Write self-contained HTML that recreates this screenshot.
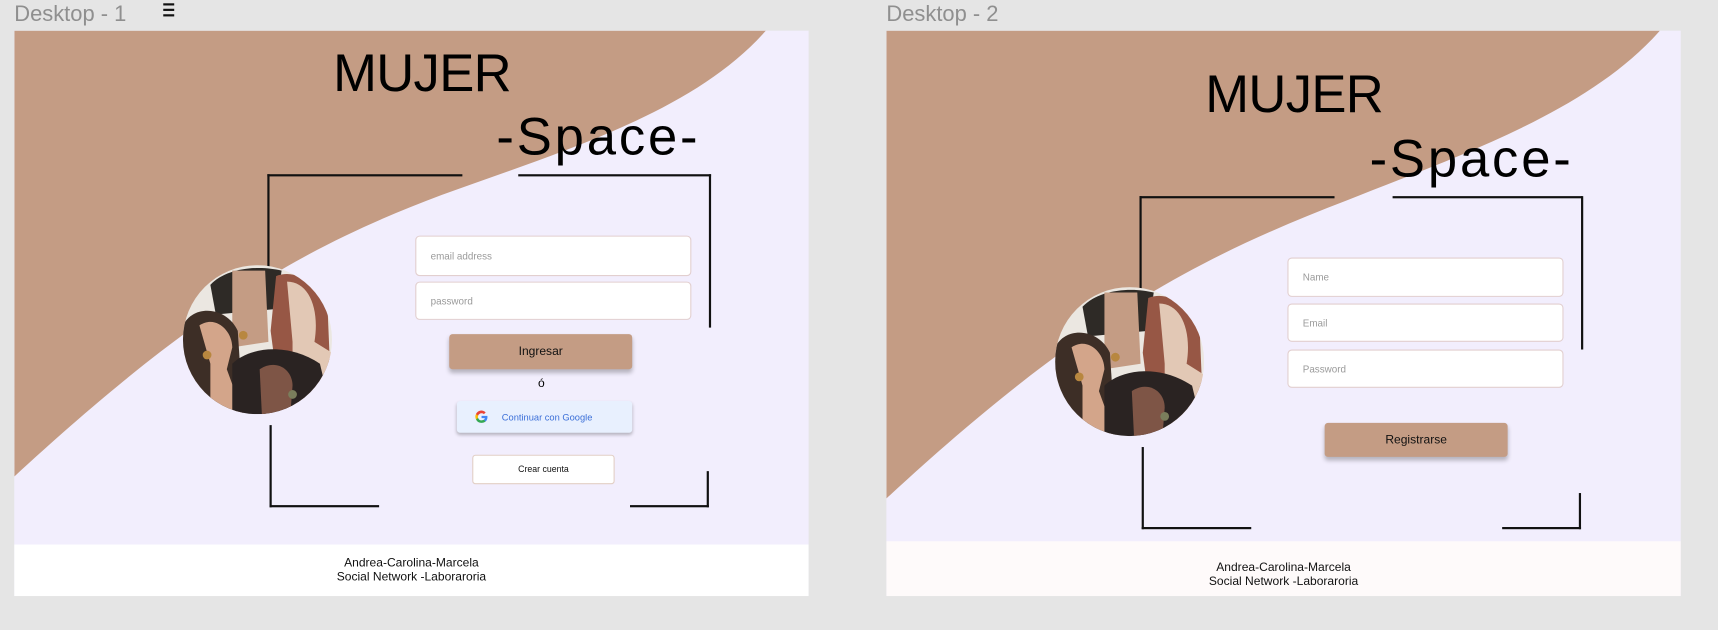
<!DOCTYPE html>
<html><head><meta charset="utf-8"><style>
*{margin:0;padding:0;box-sizing:border-box}
html,body{width:1718px;height:630px;overflow:hidden;background:#e5e5e5;font-family:"Liberation Sans",sans-serif}
#s{position:absolute;left:0;top:0;width:1568px;height:575px;transform:scale(1.09566);transform-origin:0 0}
.lbl{position:absolute;top:2px;font-size:20px;color:#8f8f8f}
.fr{position:absolute;top:28px;width:725px;height:516px;background:#f2eefd;overflow:hidden}
.fr svg.bg{position:absolute;left:0;top:0}
.foot{position:absolute;left:0;right:0;bottom:0;background:#fff;text-align:center;font-size:11px;line-height:13px;color:#111;padding-top:11px}
.t{position:absolute;font-size:48px;color:#000;line-height:1}
.m{letter-spacing:-0.6px}
.sp{letter-spacing:2.6px}
.ln{position:absolute;background:#111}
.in{position:absolute;background:#fff;border:1px solid #e2cfcf;border-radius:4px;font-size:9px;color:#9a9a9a;padding-left:13px;display:flex;align-items:center}
.btn{position:absolute;background:#c49c84;border-radius:3px;box-shadow:0 3px 4px rgba(0,0,0,.25);font-size:11px;display:flex;align-items:center;justify-content:center;color:#111}
</style></head><body><div id="s">
<div class="lbl" style="left:13px">Desktop - 1</div>
<div style="position:absolute;left:149px;top:3px;width:10px">
<div style="height:2px;background:#111;margin-bottom:3px"></div><div style="height:2px;background:#111;margin-bottom:3px"></div><div style="height:2px;background:#111"></div></div>
<div class="lbl" style="left:809px">Desktop - 2</div>

<div class="fr" style="left:13px">
<svg class="bg" width="725" height="516"><path d="M0,0 H686 C620,75 500,110 390,150 C270,195 170,250 0,407 Z" fill="#c49c84"/></svg>
<div class="t m" style="left:291px;top:16px">MUJER</div>
<div class="t sp" style="left:440px;top:74px">-Space-</div>
<div class="ln" style="left:231px;top:131px;width:178px;height:1.5px"></div>
<div class="ln" style="left:460px;top:131px;width:176px;height:1.5px"></div>
<div class="ln" style="left:231px;top:131px;width:1.5px;height:95px"></div>
<div class="ln" style="left:634px;top:131px;width:1.5px;height:140px"></div>
<div class="ln" style="left:233px;top:360px;width:1.5px;height:75px"></div>
<div class="ln" style="left:233px;top:433px;width:100px;height:1.5px"></div>
<div class="ln" style="left:562px;top:433px;width:72px;height:1.5px"></div>
<div class="ln" style="left:632px;top:402px;width:1.5px;height:33px"></div>
<svg style="position:absolute;left:154px;top:214px" width="136" height="136" viewBox="0 0 136 136"><defs><clipPath id="c1"><circle cx="68" cy="68" r="68"/></clipPath></defs><g clip-path="url(#c1)">
<rect width="136" height="136" fill="#ebe7e1"/>
<path d="M25,18 C40,2 70,0 90,5 L85,40 L30,45 Z" fill="#2e2a26"/>
<path d="M45,5 L75,5 L78,70 L45,75 Z" fill="#c49c84"/>
<path d="M85,10 C105,2 125,20 132,40 L136,136 L90,136 L80,60 Z" fill="#975745"/>
<path d="M95,15 C115,15 125,40 120,70 L136,80 L136,136 L100,136 L100,70 Z" fill="#e2c8b5"/>
<path d="M0,55 C10,35 40,38 50,60 L55,136 L0,136 Z" fill="#3d2e26"/>
<path d="M15,55 C30,45 45,60 45,75 L40,95 L55,136 L25,136 L25,90 Z" fill="#d3a58a"/>
<path d="M45,90 C60,75 95,70 125,90 L136,136 L45,136 Z" fill="#2a2322"/>
<path d="M70,95 C85,85 100,95 100,110 L98,136 L72,136 Z" fill="#7e5546"/>
<circle cx="22" cy="82" r="4" fill="#b8873f"/><circle cx="55" cy="64" r="4" fill="#b8873f"/><circle cx="100" cy="118" r="4" fill="#7a7e5c"/>
</g></svg>
<div class="in" style="left:366px;top:187px;width:252px;height:37px">email address</div>
<div class="in" style="left:366px;top:229px;width:252px;height:35px">password</div>
<div class="btn" style="left:397px;top:277px;width:167px;height:32px">Ingresar</div>
<div style="position:absolute;left:478px;top:316px;font-size:11px">ó</div>
<div style="position:absolute;left:404px;top:338px;width:160px;height:29px;background:#e8f0fe;border-radius:3px;box-shadow:0 2px 3px rgba(0,0,0,.25);font-size:8.5px;color:#3b6fd8;display:flex;align-items:center;padding-left:16px">
<svg width="13" height="13" viewBox="0 0 24 24" style="margin-right:12px"><path d="M22 12.2c0-.7-.1-1.4-.2-2H12v3.9h5.6a4.8 4.8 0 0 1-2.1 3.1v2.6h3.4c2-1.8 3.1-4.5 3.1-7.6z" fill="#4285f4"/><path d="M12 22c2.8 0 5.2-.9 6.9-2.5l-3.4-2.6c-.9.6-2.1 1-3.5 1-2.7 0-5-1.8-5.8-4.3H2.7v2.7A10 10 0 0 0 12 22z" fill="#34a853"/><path d="M6.2 13.600a6 6 0 0 1 0-3.8V7.1H2.7a10 10 0 0 0 0 9.2z" fill="#fbbc05"/><path d="M12 5.9c1.5 0 2.9.5 4 1.5l3-3A10 10 0 0 0 2.7 7.1l3.5 2.7C7 7.7 9.3 5.9 12 5.9z" fill="#ea4335"/></svg>Continuar con Google</div>
<div style="position:absolute;left:418px;top:387px;width:130px;height:27px;background:#fff;border:1px solid #e2cfc5;border-radius:3px;font-size:8px;display:flex;align-items:center;justify-content:center;color:#111">Crear cuenta</div>
<div class="foot" style="height:47px">Andrea-Carolina-Marcela<br>Social Network -Laboraroria</div>
</div>

<div class="fr" style="left:809px">
<svg class="bg" width="725" height="516"><path d="M0,0 H706 C640,75 520,115 420,155 C290,205 180,260 0,427 Z" fill="#c49c84"/></svg>
<div class="t m" style="left:291px;top:35px">MUJER</div>
<div class="t sp" style="left:441px;top:94px">-Space-</div>
<div class="ln" style="left:231px;top:151px;width:178px;height:1.5px"></div>
<div class="ln" style="left:462px;top:151px;width:173px;height:1.5px"></div>
<div class="ln" style="left:231px;top:151px;width:1.5px;height:85px"></div>
<div class="ln" style="left:634px;top:151px;width:1.5px;height:140px"></div>
<div class="ln" style="left:233px;top:380px;width:1.5px;height:75px"></div>
<div class="ln" style="left:233px;top:453px;width:100px;height:1.5px"></div>
<div class="ln" style="left:562px;top:453px;width:72px;height:1.5px"></div>
<div class="ln" style="left:632px;top:422px;width:1.5px;height:33px"></div>
<svg style="position:absolute;left:154px;top:234px" width="136" height="136" viewBox="0 0 136 136"><defs><clipPath id="c2"><circle cx="68" cy="68" r="68"/></clipPath></defs><g clip-path="url(#c2)">
<rect width="136" height="136" fill="#ebe7e1"/>
<path d="M25,18 C40,2 70,0 90,5 L85,40 L30,45 Z" fill="#2e2a26"/>
<path d="M45,5 L75,5 L78,70 L45,75 Z" fill="#c49c84"/>
<path d="M85,10 C105,2 125,20 132,40 L136,136 L90,136 L80,60 Z" fill="#975745"/>
<path d="M95,15 C115,15 125,40 120,70 L136,80 L136,136 L100,136 L100,70 Z" fill="#e2c8b5"/>
<path d="M0,55 C10,35 40,38 50,60 L55,136 L0,136 Z" fill="#3d2e26"/>
<path d="M15,55 C30,45 45,60 45,75 L40,95 L55,136 L25,136 L25,90 Z" fill="#d3a58a"/>
<path d="M45,90 C60,75 95,70 125,90 L136,136 L45,136 Z" fill="#2a2322"/>
<path d="M70,95 C85,85 100,95 100,110 L98,136 L72,136 Z" fill="#7e5546"/>
<circle cx="22" cy="82" r="4" fill="#b8873f"/><circle cx="55" cy="64" r="4" fill="#b8873f"/><circle cx="100" cy="118" r="4" fill="#7a7e5c"/>
</g></svg>
<div class="in" style="left:366px;top:207px;width:252px;height:36px">Name</div>
<div class="in" style="left:366px;top:249px;width:252px;height:35px">Email</div>
<div class="in" style="left:366px;top:291px;width:252px;height:35px">Password</div>
<div class="btn" style="left:400px;top:358px;width:167px;height:31px">Registrarse</div>
<div class="foot" style="height:50px;background:#fefafa;padding-top:18px">Andrea-Carolina-Marcela<br>Social Network -Laboraroria</div>
</div>
</div></body></html>
